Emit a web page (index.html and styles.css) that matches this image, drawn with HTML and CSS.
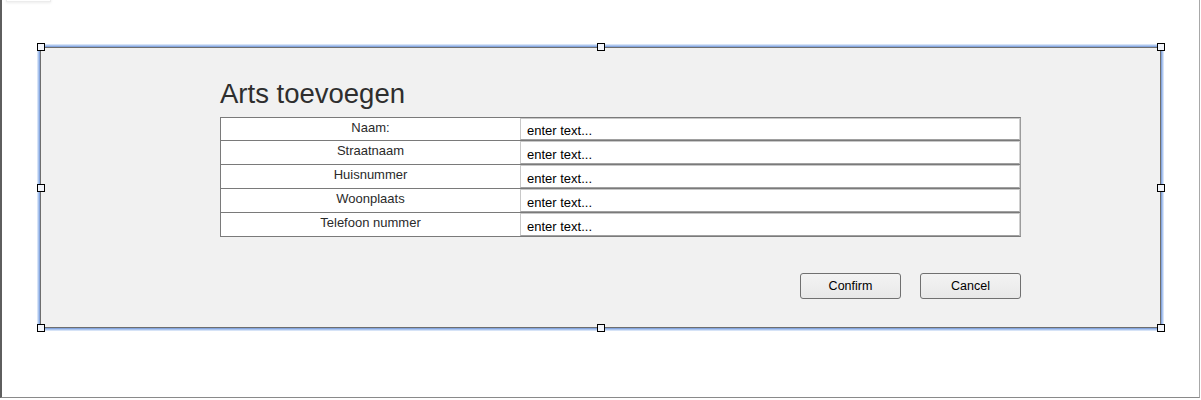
FILE: index.html
```html
<!DOCTYPE html>
<html>
<head>
<meta charset="utf-8">
<link rel="stylesheet" href="styles.css">
</head>
<body>
<div class="canvas">
  <div class="tab"></div>
  <div class="panel">
    <h1 class="title">Arts toevoegen</h1>
    <div class="form">
      <div class="row first">
        <div class="label">Naam:</div>
        <div class="input">enter text...</div>
      </div>
      <div class="row">
        <div class="label">Straatnaam</div>
        <div class="input">enter text...</div>
      </div>
      <div class="row">
        <div class="label">Huisnummer</div>
        <div class="input">enter text...</div>
      </div>
      <div class="row">
        <div class="label">Woonplaats</div>
        <div class="input">enter text...</div>
      </div>
      <div class="row last">
        <div class="label">Telefoon nummer</div>
        <div class="input">enter text...</div>
      </div>
    </div>
    <div class="actions">
      <button class="btn">Confirm</button>
      <button class="btn">Cancel</button>
    </div>
    <span class="handle h-tl"></span>
    <span class="handle h-tc"></span>
    <span class="handle h-tr"></span>
    <span class="handle h-ml"></span>
    <span class="handle h-mr"></span>
    <span class="handle h-bl"></span>
    <span class="handle h-bc"></span>
    <span class="handle h-br"></span>
  </div>
</div>
</body>
</html>
```

FILE: styles.css
```css
* { box-sizing: border-box; }

html, body {
  margin: 0;
  padding: 0;
  background: #ffffff;
  font-family: "Liberation Sans", Arial, sans-serif;
}

.canvas {
  position: relative;
  width: 1200px;
  height: 398px;
  border-left: 2px solid #5e5e5e;
  border-right: 1px solid #a8a8a8;
  border-bottom: 1px solid #8a8a8a;
  padding-top: 47px;
  padding-left: 38px;
}

.tab {
  position: absolute;
  left: 4px;
  top: -6px;
  width: 45px;
  height: 8px;
  background: #fff;
  border: 1px solid #ececec;
  box-shadow: 0 1px 3px rgba(0,0,0,0.08);
}

.panel {
  position: relative;
  width: 1121px;
  height: 281px;
  background: #f1f1f1;
  border: 1px solid #6e6e6e;
  box-shadow: 0 0 0 1px #86a6de, 0 0 0 2px #adc6ee, 0 0 0 3px #d6e3f7;
  padding: 30px 0 0 179px;
}

.title {
  margin: 0 0 7px 0;
  font-size: 27.5px;
  line-height: 32px;
  font-weight: normal;
  color: #2e2e2e;
}

.form {
  width: 801px;
  border: 1px solid #7a7a7a;
  border-right-color: #9c9c9c;
  background: #fff;
}

.row {
  display: flex;
  height: 24px;
  border-bottom: 1px solid #7a7a7a;
}

.row.first { height: 23px; }
.row.last { height: 23px; border-bottom: none; }

.label {
  width: 299px;
  text-align: center;
  font-size: 13px;
  line-height: 15px;
  padding-top: 2px;
  color: #2a2a2a;
}

.input {
  flex: 1;
  display: flex;
  align-items: flex-end;
  border: 1px solid #c8c8c8;
  border-right-color: #d0d0d0;
  border-bottom-color: #a0a0a0;
  padding: 0 5px 1px 6px;
  font-size: 13px;
  line-height: 15px;
  color: #000;
  background: #fff;
}

.actions {
  display: flex;
  justify-content: flex-end;
  gap: 19px;
  width: 801px;
  margin-top: 36px;
}

.btn {
  width: 101px;
  height: 26px;
  border: 1px solid #707070;
  border-radius: 3px;
  background: linear-gradient(#f3f3f3, #e8e8e8);
  font-family: "Liberation Sans", Arial, sans-serif;
  font-size: 12.5px;
  color: #000;
  padding: 0;
}

.handle {
  position: absolute;
  width: 8px;
  height: 8px;
  border: 1px solid #000;
  background: #f3f5fa;
}

.h-tl { left: -4px; top: -5px; }
.h-tc { left: calc(50% - 4px); top: -5px; }
.h-tr { right: -5px; top: -5px; }
.h-ml { left: -4px; top: calc(50% - 4px); }
.h-mr { right: -5px; top: calc(50% - 4px); }
.h-bl { left: -4px; bottom: -5px; }
.h-bc { left: calc(50% - 4px); bottom: -5px; }
.h-br { right: -5px; bottom: -5px; }
```
